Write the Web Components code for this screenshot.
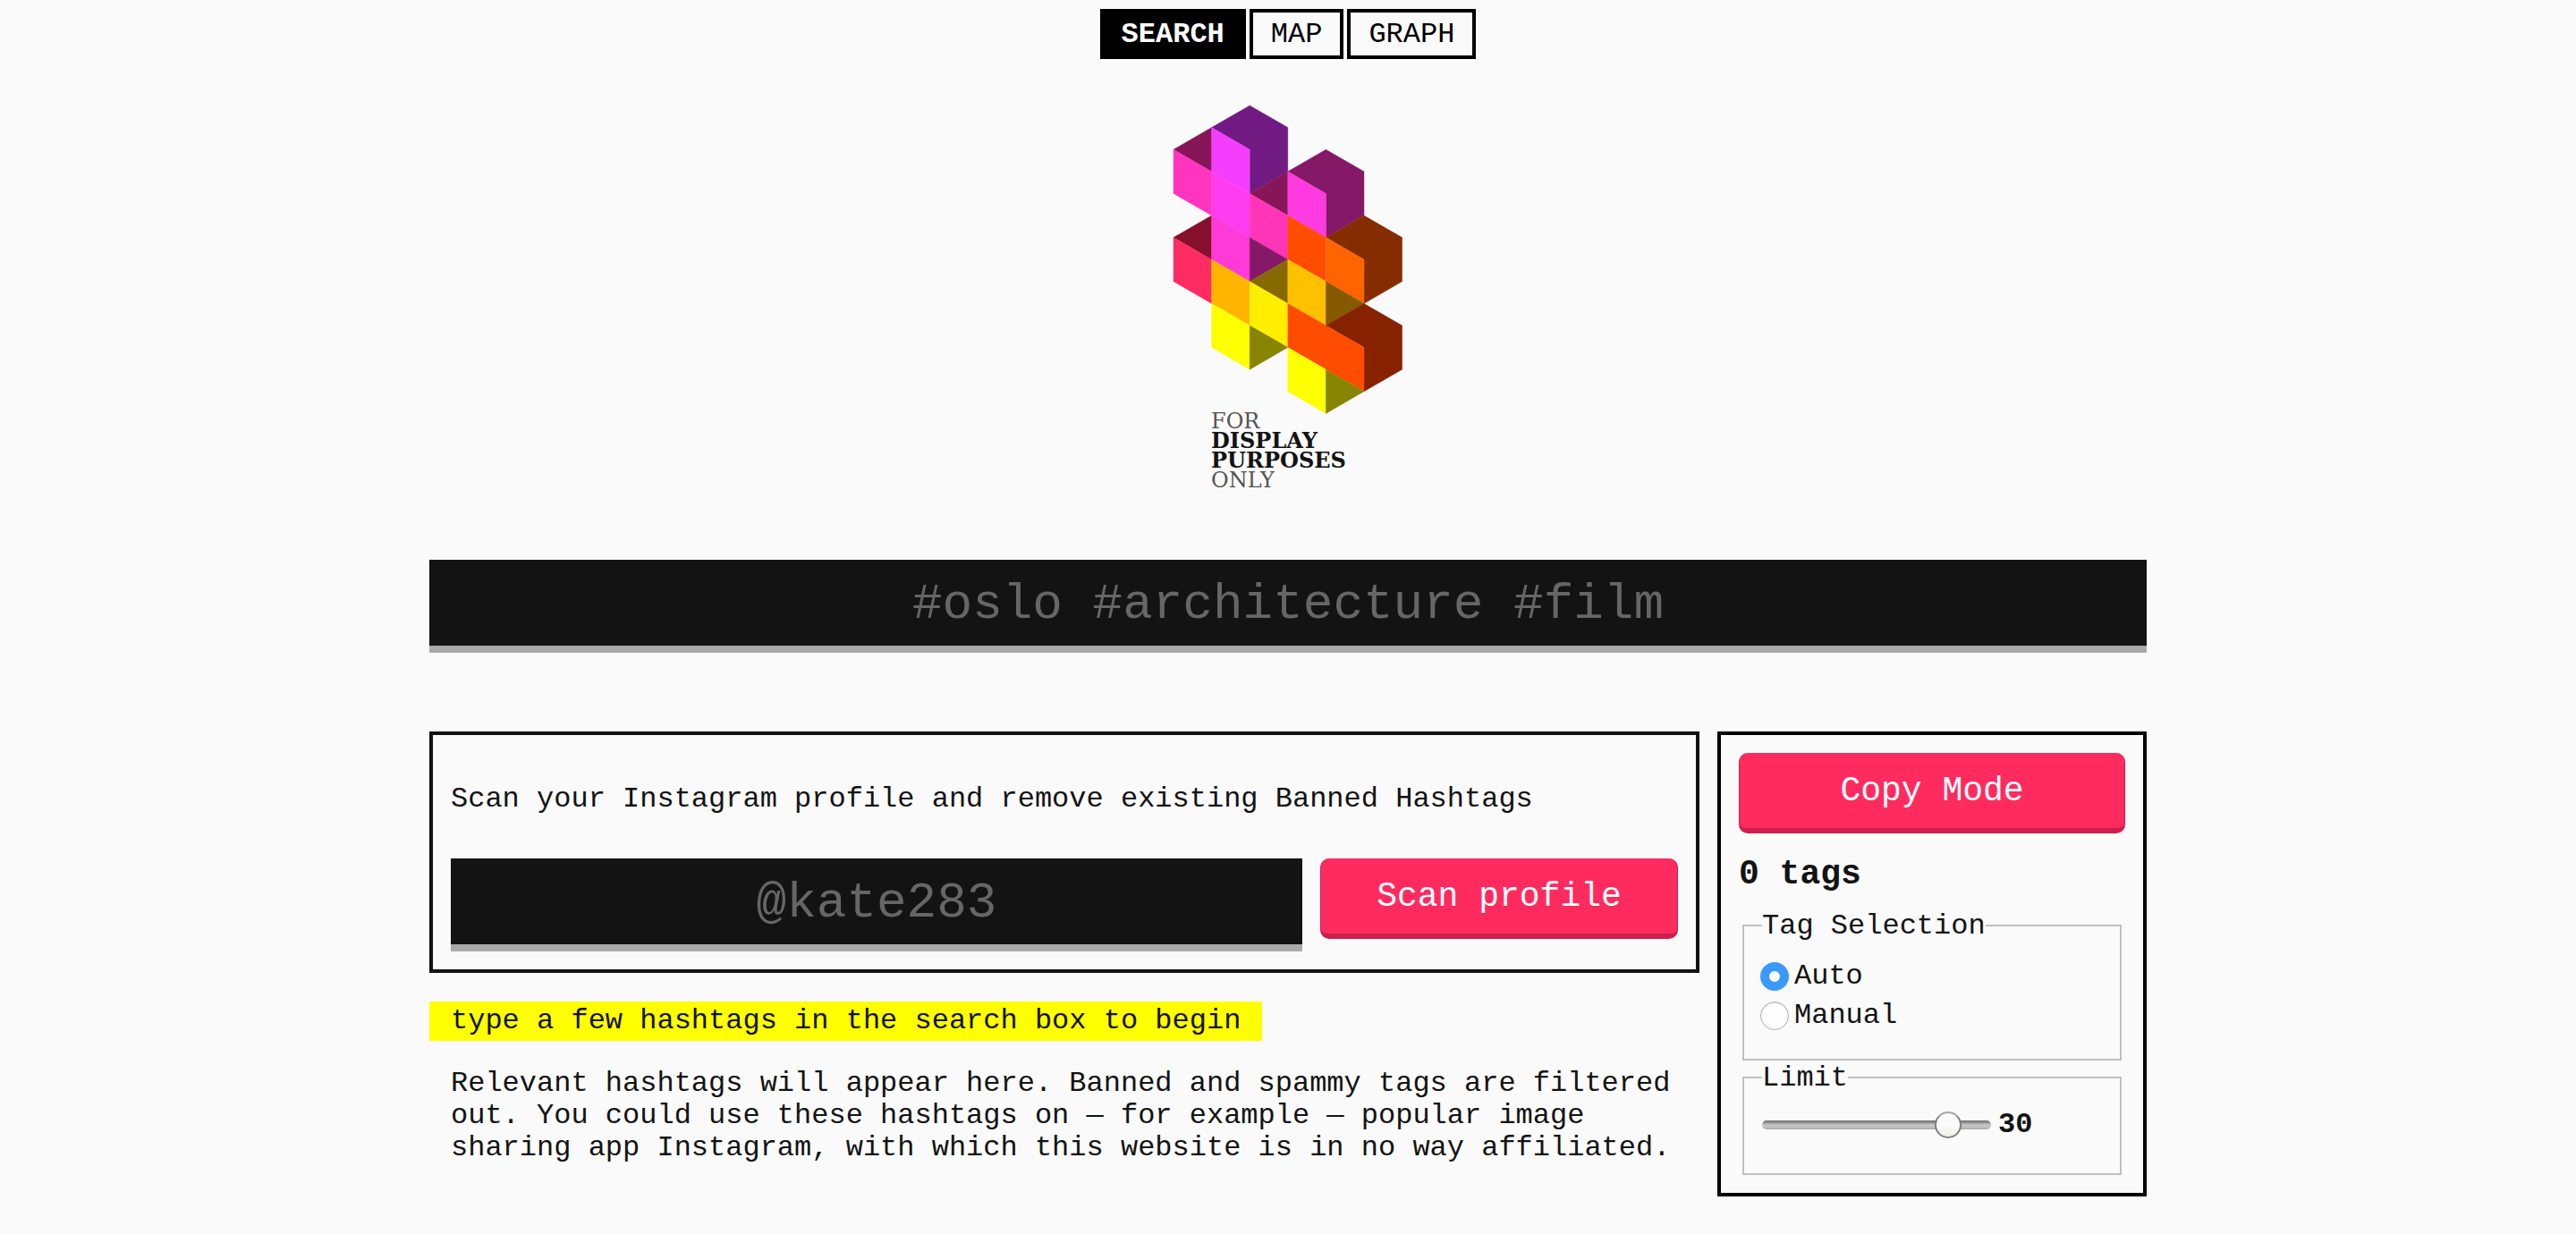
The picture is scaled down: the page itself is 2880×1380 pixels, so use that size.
<!DOCTYPE html>
<html lang="en">
<head>
<meta charset="utf-8">
<meta name="viewport" content="width=device-width, initial-scale=1">
<title>For Display Purposes Only</title>
<style>
    body {
        margin: 0;
        background: #fafafa;
        color: #131313;
        font: 32px/36px "Liberation Mono", "Courier New", monospace;
    }
</style>
</head>
<body>
<display-purposes></display-purposes>

<script>
// shared by the search box and the profile box
const fieldStyles = `
    input[type="text"] {
        box-sizing: border-box;
        display: block;
        width: 100%;
        height: 104px;
        margin: 0;
        padding: 4px 20px 0;
        border: 0;
        border-bottom: 8px solid #a9a9a9;
        border-radius: 0;
        background: #131313;
        color: #fafafa;
        font: inherit;
        font-size: 56px;
        text-align: center;
    }

    input::placeholder {
        color: #666;
        opacity: 1;
    }
`

class ShadowElement extends HTMLElement {

    connectedCallback() {
        if (this.shadowRoot) return
        const template = document.createElement('template')
        template.innerHTML = this.render()
        this.attachShadow({ mode: 'open' }).appendChild(template.content.cloneNode(true))
        this.ready(this.shadowRoot)
    }

    ready() {}
}

class NavTab extends ShadowElement {

    render() {
        return `
            <a href="${this.getAttribute('href')}"><slot></slot></a>

            <style>
                :host {
                    display: block;
                }

                a {
                    display: block;
                    padding: 7px 20px 5px;
                    border: 4px solid #000;
                    color: #000;
                    text-decoration: none;
                }

                :host([active]) a {
                    background: #000;
                    color: #fff;
                    font-weight: bold;
                }
            </style>
        `
    }
}

class SiteLogo extends ShadowElement {

    // each face is a colour and its corners, in half-cube grid units
    FACES = [
        ['#861657', '0,2 1,1 1,3'],
        ['#ff35c0', '0,2 1,3 1,5 0,4'],
        ['#860f2b', '0,6 1,5 1,7'],
        ['#ff2b63', '0,6 1,7 1,9 0,8'],

        ['#711b82', '1,1 2,0 3,1 3,3 2,4 2,2'],
        ['#f53dff', '1,1 2,2 2,4 1,3'],
        ['#ff3df0', '1,3 2,4 2,6 1,5'],
        ['#ff3ad8', '1,5 2,6 2,8 1,7'],
        ['#ffb400', '1,7 2,8 2,10 1,9'],
        ['#ffff00', '1,9 2,10 2,12 1,11'],

        ['#861657', '2,4 3,3 3,5'],
        ['#ff35b8', '2,4 3,5 3,7 2,6'],
        ['#861868', '2,6 3,7 2,8'],
        ['#866a00', '2,8 3,7 3,9'],
        ['#ffee00', '2,8 3,9 3,11 2,10'],
        ['#868400', '2,10 3,11 2,12'],

        ['#861868', '3,3 4,2 5,3 5,5 4,6 4,4'],
        ['#ff3ae0', '3,3 4,4 4,6 3,5'],
        ['#ff4d00', '3,5 4,6 4,8 3,7'],
        ['#ffc000', '3,7 4,8 4,10 3,9'],
        ['#862d00', '4,6 5,5 6,6 6,8 5,9 5,7'],
        ['#ff6400', '4,6 5,7 5,9 4,8'],
        ['#865a00', '4,8 5,9 4,10'],
        ['#862200', '4,10 5,9 6,10 6,12 5,13 5,11'],
        ['#ff4d00', '3,9 5,11 5,13 3,11'],
        ['#ffff00', '3,11 4,12 4,14 3,13'],
        ['#868400', '4,12 5,13 4,14'],
    ]

    render() {
        const faces = this.FACES.map(([fill, points]) => `<polygon fill="${fill}" stroke="${fill}" points="${points}"/>`)
        return `
            <svg viewBox="0 0 256 432" width="256" height="432">
                <g transform="scale(42.6 24.6)">${faces.join('')}</g>
                <text>
                    <tspan x="42" y="361" class="thin">FOR</tspan>
                    <tspan x="42" y="383">DISPLAY</tspan>
                    <tspan x="42" y="405">PURPOSES</tspan>
                    <tspan x="42" y="427" class="thin">ONLY</tspan>
                </text>
            </svg>

            <style>
                :host {
                    display: block;
                }

                svg {
                    display: block;
                    margin: 0 auto;
                    overflow: visible;
                }

                polygon {
                    stroke-width: 0.4px;
                    stroke-linejoin: round;
                    vector-effect: non-scaling-stroke;
                }

                text {
                    font: bold 24px "DejaVu Serif", serif;
                    fill: #131313;
                }

                .thin {
                    font-weight: normal;
                    fill: #555;
                }
            </style>
        `
    }
}

class HashtagSearch extends ShadowElement {

    render() {
        return `
            <input type="text" aria-label="Hashtags" placeholder="#oslo #architecture #film">

            <style>
                :host {
                    display: block;
                }
                ${fieldStyles}
            </style>
        `
    }
}

class PushButton extends ShadowElement {

    render() {
        return `
            <button type="button"><slot></slot></button>

            <style>
                :host {
                    display: block;
                }

                button {
                    box-sizing: border-box;
                    display: block;
                    width: 100%;
                    height: 90px;
                    padding: 2px 0 0;
                    border: solid #cc1f4c;
                    border-width: 0 1px 6px;
                    border-radius: 10px;
                    background: #ff2b5f;
                    color: #fff;
                    font: inherit;
                    font-size: 38px;
                    line-height: 44px;
                    cursor: pointer;
                }
            </style>
        `
    }
}

class ProfileScan extends ShadowElement {

    render() {
        return `
            <label for="profile"><slot></slot></label>
            <div>
                <input type="text" id="profile" placeholder="@kate283">
                <push-button>Scan profile</push-button>
            </div>

            <style>
                :host {
                    display: block;
                    padding: 54px 20px 20px;
                    border: 4px solid #131313;
                }

                label {
                    display: block;
                    margin-bottom: 48px;
                }

                div {
                    display: grid;
                    grid-template-columns: 1fr 400px;
                    align-items: start;
                    gap: 20px;
                }
                ${fieldStyles}
            </style>
        `
    }
}

class TagHints extends ShadowElement {

    render() {
        return `
            <mark><slot name="title"></slot></mark>
            <p><slot></slot></p>

            <style>
                :host {
                    display: block;
                }

                mark {
                    display: inline-block;
                    padding: 4px 24px;
                    background: #ff0;
                    color: inherit;
                }

                p {
                    margin: 30px 24px 0;
                }
            </style>
        `
    }
}

class TagOptions extends ShadowElement {

    render() {
        return `
            <push-button>Copy Mode</push-button>
            <h2>0 tags</h2>
            <fieldset class="selection">
                <legend>Tag Selection</legend>
                <label><input type="radio" name="selection" value="auto" checked>Auto</label>
                <label><input type="radio" name="selection" value="manual">Manual</label>
            </fieldset>
            <fieldset class="limit">
                <legend id="limit-label">Limit</legend>
                <div>
                    <input type="range" id="limit" aria-labelledby="limit-label" min="1" max="35" value="30">
                    <output for="limit">30</output>
                </div>
            </fieldset>

            <style>
                :host {
                    display: block;
                    padding: 20px;
                    border: 4px solid #000;
                }

                h2 {
                    margin: 24px 0 16px;
                    font-size: 38px;
                    line-height: 44px;
                }

                fieldset {
                    min-width: 0;
                    margin: 0 4px;
                    border: 2px solid #c0c0c0;
                }

                .selection {
                    padding: 16px 18px 26px;
                }

                .limit {
                    padding: 16px 18px 36px;
                }

                legend {
                    margin-left: 2px;
                    padding: 2px 0 0;
                }

                label {
                    display: flex;
                    align-items: center;
                    gap: 6px;
                    height: 44px;
                }

                input {
                    appearance: none;
                    margin: 0;
                }

                input[type="radio"] {
                    box-sizing: border-box;
                    width: 32px;
                    height: 32px;
                    border: 1px solid #b0b0b0;
                    border-radius: 50%;
                    background: #fdfdfd;
                    box-shadow: inset 0 1px 1px #ddd;
                }

                input[type="radio"]:checked {
                    border: 10px solid #3b99fc;
                    box-shadow: none;
                }

                .limit div {
                    display: flex;
                    align-items: center;
                    gap: 8px;
                    margin-left: 2px;
                }

                input[type="range"] {
                    width: 256px;
                    height: 30px;
                    background: none;
                }

                input[type="range"]::-webkit-slider-runnable-track {
                    height: 10px;
                    border-radius: 5px;
                    background: linear-gradient(#707070, #999 30%, #c2c2c2 45%, #c2c2c2 75%, #a6a6a6);
                }

                input[type="range"]::-webkit-slider-thumb {
                    appearance: none;
                    box-sizing: border-box;
                    width: 30px;
                    height: 30px;
                    margin-top: -10px;
                    border: 2px solid #808080;
                    border-top-color: #a6a6a6;
                    border-radius: 50%;
                    background: linear-gradient(#fafafa 50%, #f0f0ec);
                }

                output {
                    font-weight: bold;
                }
            </style>
        `
    }

    ready(shadow) {
        const range = shadow.querySelector('#limit')
        const output = shadow.querySelector('output')
        range.addEventListener('input', () => output.textContent = range.value)
    }
}

class DisplayPurposes extends ShadowElement {

    render() {
        return `
            <nav>
                <nav-tab href="#search" active>SEARCH</nav-tab>
                <nav-tab href="#map">MAP</nav-tab>
                <nav-tab href="#graph">GRAPH</nav-tab>
            </nav>
            <site-logo></site-logo>
            <main>
                <hashtag-search></hashtag-search>
                <section>
                    <div>
                        <profile-scan>Scan your Instagram profile and remove existing Banned Hashtags</profile-scan>
                        <tag-hints>
                            <span slot="title">type a few hashtags in the search box to begin</span>
                            Relevant hashtags will appear here. Banned and spammy tags are filtered out. You could use these hashtags on — for example — popular image sharing app Instagram, with which this website is in no way affiliated.
                        </tag-hints>
                    </div>
                    <tag-options></tag-options>
                </section>
            </main>

            <style>
                :host {
                    display: block;
                    padding: 10px 20px 20px;
                }

                nav {
                    display: flex;
                    justify-content: center;
                    gap: 4px;
                    margin-bottom: 52px;
                }

                main {
                    max-width: 1920px;
                    margin: 76px auto 0;
                }

                section {
                    display: grid;
                    grid-template-columns: 1fr 25%;
                    align-items: start;
                    gap: 20px;
                    margin-top: 88px;
                }

                tag-hints {
                    margin-top: 32px;
                }
            </style>
        `
    }
}

customElements.define('nav-tab', NavTab)
customElements.define('site-logo', SiteLogo)
customElements.define('hashtag-search', HashtagSearch)
customElements.define('push-button', PushButton)
customElements.define('profile-scan', ProfileScan)
customElements.define('tag-hints', TagHints)
customElements.define('tag-options', TagOptions)
customElements.define('display-purposes', DisplayPurposes)
</script>
</body>
</html>
